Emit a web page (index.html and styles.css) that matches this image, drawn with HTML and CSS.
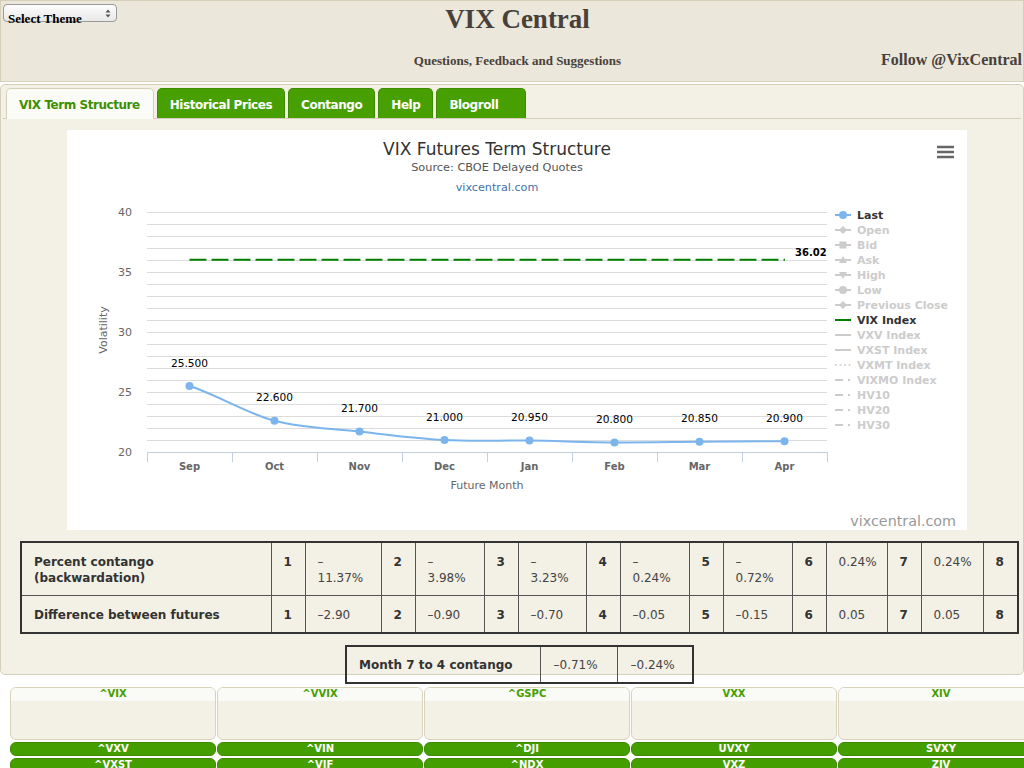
FILE: index.html
```html
<!DOCTYPE html>
<html lang="en">
<head>
<meta charset="utf-8">
<title>VIX Central</title>
<link rel="stylesheet" href="styles.css">
</head>
<body>
<header class="top">
  <div class="top-row">
    <div class="theme-select">
      <span class="theme-label">Select Theme</span>
      <svg class="theme-arrows" width="6" height="9" viewBox="0 0 6 9"><path d="M3 0.5L5.5 3.5H0.5Z M3 8.5L5.5 5.5H0.5Z" fill="#555"/></svg>
    </div>
    <h1 class="site-title">VIX Central</h1>
    <span></span>
  </div>
  <div class="sub-row">
    <span></span>
    <a class="feedback">Questions, Feedback and Suggestions</a>
    <span class="follow">Follow @VixCentral</span>
  </div>
</header>

<main class="panel">
  <ul class="tabs">
    <li class="tab active">VIX Term Structure</li>
    <li class="tab">Historical Prices</li>
    <li class="tab">Contango</li>
    <li class="tab">Help</li>
    <li class="tab tab-wide">Blogroll</li>
  </ul>

  <section class="tab-body">
    <div class="chart">
      <svg class="chart-svg" width="900" height="400" viewBox="0 0 900 400" font-family="DejaVu Sans, Verdana, sans-serif">
        <rect x="0" y="0" width="900" height="400" fill="#ffffff"/>
        <text x="430" y="25" text-anchor="middle" font-size="17" fill="#333333">VIX Futures Term Structure</text>
        <text x="430" y="41" text-anchor="middle" font-size="11.3" fill="#555555">Source: CBOE Delayed Quotes</text>
        <text x="430" y="61" text-anchor="middle" font-size="11.2" fill="#4572a7">vixcentral.com</text>

        <path d="M870 17H887M870 22H887M870 27H887" stroke="#666666" stroke-width="2.6"/>

        <path fill="none" stroke="#dcdcdc" stroke-width="1" d="M80 82.5H760M80 94.5H760M80 106.5H760M80 118.5H760M80 130.5H760M80 142.5H760M80 154.5H760M80 166.5H760M80 178.5H760M80 190.5H760M80 202.5H760M80 214.5H760M80 226.5H760M80 238.5H760M80 250.5H760M80 262.5H760M80 274.5H760M80 286.5H760M80 298.5H760M80 310.5H760"/>
        <path fill="none" stroke="#c0d0e0" stroke-width="1" d="M80 322.5H760M80.5 322V332M165.5 322V332M250.5 322V332M335.5 322V332M420.5 322V332M505.5 322V332M590.5 322V332M675.5 322V332M760.5 322V332"/>

        <g font-size="11" fill="#666666" text-anchor="end">
          <text x="65" y="86">40</text>
          <text x="65" y="146">35</text>
          <text x="65" y="206">30</text>
          <text x="65" y="266">25</text>
          <text x="65" y="326">20</text>
        </g>
        <text transform="translate(40 200) rotate(-90)" text-anchor="middle" font-size="11" fill="#666666">Volatility</text>

        <g font-size="10" font-weight="bold" fill="#666666" text-anchor="middle">
          <text x="122.5" y="340">Sep</text>
          <text x="207.5" y="340">Oct</text>
          <text x="292.5" y="340">Nov</text>
          <text x="377.5" y="340">Dec</text>
          <text x="462.5" y="340">Jan</text>
          <text x="547.5" y="340">Feb</text>
          <text x="632.5" y="340">Mar</text>
          <text x="717.5" y="340">Apr</text>
        </g>
        <text x="420" y="359" text-anchor="middle" font-size="11" fill="#666666">Future Month</text>

        <path d="M122.5 129.8H718" stroke="#008000" stroke-width="2" stroke-dasharray="17 5" fill="none"/>
        <text x="728" y="126" font-size="10" font-weight="bold" fill="#000000">36.02</text>

        <path fill="none" stroke="#7cb5ec" stroke-width="2" d="M122.5 256C150.83 265 178.83 283.2 207.5 290.8C235.83 298.4 263.83 298.4 292.5 301.6C320.83 304.8 348.83 308.5 377.5 310C405.83 311.5 433.83 310.2 462.5 310.6C490.83 311 518.83 312.2 547.5 312.4C575.83 312.6 603.83 312 632.5 311.8C660.83 311.6 688.83 311.4 717.5 311.2"/>
        <g fill="#7cb5ec">
          <circle cx="122.5" cy="256" r="4"/>
          <circle cx="207.5" cy="290.8" r="4"/>
          <circle cx="292.5" cy="301.6" r="4"/>
          <circle cx="377.5" cy="310" r="4"/>
          <circle cx="462.5" cy="310.6" r="4"/>
          <circle cx="547.5" cy="312.4" r="4"/>
          <circle cx="632.5" cy="311.8" r="4"/>
          <circle cx="717.5" cy="311.2" r="4"/>
        </g>
        <g font-size="10.6" fill="#000000" text-anchor="middle">
          <text x="122.5" y="236.5">25.500</text>
          <text x="207.5" y="271.3">22.600</text>
          <text x="292.5" y="282.1">21.700</text>
          <text x="377.5" y="290.5">21.000</text>
          <text x="462.5" y="291.1">20.950</text>
          <text x="547.5" y="292.9">20.800</text>
          <text x="632.5" y="292.3">20.850</text>
          <text x="717.5" y="291.7">20.900</text>
        </g>

        <g font-size="11" font-weight="bold">
          <path d="M768 85H784" stroke="#7cb5ec" stroke-width="2"/>
          <circle cx="776" cy="85" r="4" fill="#7cb5ec"/>
          <text x="790" y="89" fill="#333333">Last</text>

          <path d="M768 100H784" stroke="#cccccc" stroke-width="2"/>
          <path d="M776 96L780 100L776 104L772 100Z" fill="#cccccc"/>
          <text x="790" y="104" fill="#cccccc">Open</text>

          <path d="M768 115H784" stroke="#cccccc" stroke-width="2"/>
          <rect x="772.5" y="111.5" width="7" height="7" fill="#cccccc"/>
          <text x="790" y="119" fill="#cccccc">Bid</text>

          <path d="M768 130H784" stroke="#cccccc" stroke-width="2"/>
          <path d="M776 126L780 133H772Z" fill="#cccccc"/>
          <text x="790" y="134" fill="#cccccc">Ask</text>

          <path d="M768 145H784" stroke="#cccccc" stroke-width="2"/>
          <path d="M772 142H780L776 149Z" fill="#cccccc"/>
          <text x="790" y="149" fill="#cccccc">High</text>

          <path d="M768 160H784" stroke="#cccccc" stroke-width="2"/>
          <circle cx="776" cy="160" r="4" fill="#cccccc"/>
          <text x="790" y="164" fill="#cccccc">Low</text>

          <path d="M768 175H784" stroke="#cccccc" stroke-width="2"/>
          <path d="M776 171L780 175L776 179L772 175Z" fill="#cccccc"/>
          <text x="790" y="179" fill="#cccccc">Previous Close</text>

          <path d="M768 190H784" stroke="#008000" stroke-width="2"/>
          <text x="790" y="194" fill="#333333">VIX Index</text>

          <path d="M768 205H784" stroke="#cccccc" stroke-width="2"/>
          <text x="790" y="209" fill="#cccccc">VXV Index</text>

          <path d="M768 220H784" stroke="#cccccc" stroke-width="2"/>
          <text x="790" y="224" fill="#cccccc">VXST Index</text>

          <path d="M768 235H784" stroke="#cccccc" stroke-width="1.5" stroke-dasharray="2 2.5"/>
          <text x="790" y="239" fill="#cccccc">VXMT Index</text>

          <path d="M768 250H784" stroke="#cccccc" stroke-width="2" stroke-dasharray="8 5 2 10"/>
          <text x="790" y="254" fill="#cccccc">VIXMO Index</text>

          <path d="M768 265H784" stroke="#cccccc" stroke-width="2" stroke-dasharray="8 5 2 10"/>
          <text x="790" y="269" fill="#cccccc">HV10</text>

          <path d="M768 280H784" stroke="#cccccc" stroke-width="2" stroke-dasharray="8 5 2 10"/>
          <text x="790" y="284" fill="#cccccc">HV20</text>

          <path d="M768 295H784" stroke="#cccccc" stroke-width="2" stroke-dasharray="8 5 2 10"/>
          <text x="790" y="299" fill="#cccccc">HV30</text>
        </g>

        <text x="889" y="396" text-anchor="end" font-size="14.3" fill="#999999">vixcentral.com</text>
      </svg>
    </div>

    <table class="spread">
      <colgroup>
        <col class="c-label">
        <col class="c-num"><col class="c-v76">
        <col class="c-num"><col class="c-v69">
        <col class="c-num"><col class="c-v68">
        <col class="c-num"><col class="c-v69">
        <col class="c-num"><col class="c-v69">
        <col class="c-num"><col class="c-v61">
        <col class="c-num"><col class="c-v62">
        <col class="c-num8">
      </colgroup>
      <tr>
        <th class="row-label">Percent contango (backwardation)</th>
        <td class="n">1</td><td class="v">–<br>11.37%</td>
        <td class="n">2</td><td class="v">–<br>3.98%</td>
        <td class="n">3</td><td class="v">–<br>3.23%</td>
        <td class="n">4</td><td class="v">–<br>0.24%</td>
        <td class="n">5</td><td class="v">–<br>0.72%</td>
        <td class="n">6</td><td class="v">0.24%</td>
        <td class="n">7</td><td class="v">0.24%</td>
        <td class="n">8</td>
      </tr>
      <tr>
        <th class="row-label">Difference between futures</th>
        <td class="n">1</td><td class="v">–2.90</td>
        <td class="n">2</td><td class="v">–0.90</td>
        <td class="n">3</td><td class="v">–0.70</td>
        <td class="n">4</td><td class="v">–0.05</td>
        <td class="n">5</td><td class="v">–0.15</td>
        <td class="n">6</td><td class="v">0.05</td>
        <td class="n">7</td><td class="v">0.05</td>
        <td class="n">8</td>
      </tr>
    </table>

    <table class="month-spread">
      <colgroup><col class="m-label"><col class="m-v1"><col class="m-v2"></colgroup>
      <tr>
        <th class="row-label">Month 7 to 4 contango</th>
        <td class="v">–0.71%</td>
        <td class="v">–0.24%</td>
      </tr>
    </table>
  </section>
</main>

<section class="tickers">
  <div class="ticker-col">
    <div class="quote-box"><div class="quote-head">^VIX</div></div>
    <div class="pill">^VXV</div>
    <div class="pill">^VXST</div>
  </div>
  <div class="ticker-col">
    <div class="quote-box"><div class="quote-head">^VVIX</div></div>
    <div class="pill">^VIN</div>
    <div class="pill">^VIF</div>
  </div>
  <div class="ticker-col">
    <div class="quote-box"><div class="quote-head">^GSPC</div></div>
    <div class="pill">^DJI</div>
    <div class="pill">^NDX</div>
  </div>
  <div class="ticker-col">
    <div class="quote-box"><div class="quote-head">VXX</div></div>
    <div class="pill">UVXY</div>
    <div class="pill">VXZ</div>
  </div>
  <div class="ticker-col">
    <div class="quote-box"><div class="quote-head">XIV</div></div>
    <div class="pill">SVXY</div>
    <div class="pill">ZIV</div>
  </div>
</section>
</body>
</html>
```

FILE: styles.css
```css
* { box-sizing: border-box; }

html, body { margin: 0; padding: 0; }

body {
  width: 1024px;
  height: 768px;
  overflow: hidden;
  background: #ffffff;
  font-family: "DejaVu Sans", Verdana, sans-serif;
  color: #333333;
}

/* ---------- header ---------- */
.top {
  height: 82px;
  background: #ebe7da;
  border: 1px solid #d6d0bb;
  padding: 3px 1px 0 2px;
  font-family: "Liberation Serif", "Times New Roman", serif;
  color: #48413a;
}

.top-row {
  display: grid;
  grid-template-columns: 1fr auto 1fr;
  align-items: start;
}

.theme-select {
  justify-self: start;
  width: 114px;
  height: 18px;
  border: 1px solid #9a9a9a;
  border-radius: 4px;
  background: linear-gradient(#fdfdfd, #e8e8e8);
  display: flex;
  justify-content: space-between;
  align-items: flex-start;
  padding: 0 5px 0 4px;
}

.theme-label {
  height: 16px;
  font-size: 13px;
  font-weight: bold;
  line-height: 28px;
  color: #000000;
  white-space: nowrap;
}

.theme-arrows { margin-top: 4px; }

.site-title {
  margin: 0;
  padding-left: 10px;
  font-size: 27px;
  line-height: 30px;
  font-weight: bold;
}

.sub-row {
  display: grid;
  grid-template-columns: 1fr auto 1fr;
  align-items: baseline;
  margin-top: 16px;
}

.feedback {
  padding-left: 10px;
  font-size: 13px;
  font-weight: bold;
  line-height: 20px;
}

.follow {
  justify-self: end;
  font-size: 16px;
  font-weight: bold;
  line-height: 20px;
}

/* ---------- tab panel ---------- */
.panel {
  display: block;
  margin-top: 2px;
  height: 591px;
  border: 1px solid #d6d0bb;
  border-radius: 5px;
  background: #f3f0e5;
  padding: 2px;
}

.tabs {
  list-style: none;
  margin: 0;
  padding: 1px 3px 0;
  display: flex;
  gap: 3px;
  border-bottom: 1px solid #d6d0bb;
}

.tab {
  height: 30px;
  padding: 0 12px;
  border: 1px solid #3e8a00;
  border-bottom: 0;
  border-radius: 5px 5px 0 0;
  background: #479f02;
  color: #ffffff;
  font-size: 12px;
  font-weight: bold;
  letter-spacing: -0.45px;
  line-height: 32px;
  white-space: nowrap;
}

.tab-wide { padding-right: 27px; }

.tab.active {
  height: 31px;
  margin-bottom: -1px;
  padding-right: 13px;
  background: #fbfbf7;
  border-color: #d6d0bb;
  color: #3e8f00;
}

.tab-body { padding-top: 11px; }

.chart {
  margin-left: 64px;
  width: 900px;
  height: 400px;
  background: #ffffff;
}

.chart-svg { display: block; }

/* ---------- tables ---------- */
.spread,
.month-spread {
  border-collapse: collapse;
  table-layout: fixed;
  border: 2px solid #333333;
  font-size: 12px;
  line-height: 16px;
}

.spread {
  margin: 11px 0 0 17px;
  width: 999px;
}

.month-spread {
  margin: 11px 0 0 342px;
  width: 349px;
}

.spread th,
.spread td,
.month-spread th,
.month-spread td {
  border: 1px solid #555555;
  padding: 11px 12px 9px;
  vertical-align: top;
  text-align: left;
}

.month-spread th,
.month-spread td { padding: 10px 12px 9px; }

.month-spread td { padding-left: 13px; }

.row-label { font-weight: bold; color: #333333; }
.n { font-weight: bold; color: #333333; }
.v { font-weight: normal; color: #444444; }

.c-label { width: 250px; }
.c-num { width: 34px; }
.c-num8 { width: 35px; }
.c-v76 { width: 76px; }
.c-v69 { width: 69px; }
.c-v68 { width: 68px; }
.c-v61 { width: 61px; }
.c-v62 { width: 62px; }

.m-label { width: 194px; }
.m-v1 { width: 77px; }
.m-v2 { width: 76px; }

/* ---------- ticker strip ---------- */
.tickers {
  margin: 12px 0 0 10px;
  height: 81px;
  overflow: hidden;
  display: grid;
  grid-template-columns: repeat(5, 206px);
  column-gap: 1px;
  align-items: start;
}

.ticker-col {
  display: flex;
  flex-direction: column;
}

.quote-box {
  height: 53px;
  margin-bottom: 2px;
  border: 1px solid #d9d2bd;
  border-radius: 6px;
  background: #f3f0e5;
  overflow: hidden;
}

.quote-head {
  height: 13px;
  background: #fafaf6;
  color: #459e00;
  font-size: 10px;
  font-weight: bold;
  line-height: 12px;
  text-align: center;
}

.pill {
  height: 14px;
  margin-bottom: 2px;
  border: 1px solid #3c8a00;
  border-radius: 6px;
  background: #459e00;
  color: #ffffff;
  font-size: 10px;
  font-weight: bold;
  line-height: 12px;
  text-align: center;
}
```
